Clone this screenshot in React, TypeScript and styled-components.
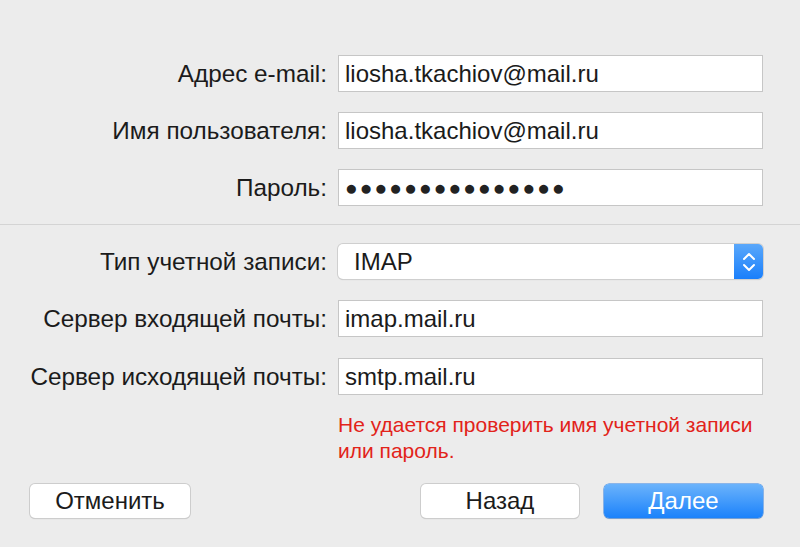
import React from "react";
import styled, { createGlobalStyle } from "styled-components";

const GlobalStyle = createGlobalStyle`
  html, body {
    margin: 0;
    padding: 0;
    background: #ececec;
  }
  body {
    font-family: "Liberation Sans", Arial, sans-serif;
    color: #1d1d1d;
  }
`;

const Window = styled.div`
  width: 800px;
  height: 547px;
  box-sizing: border-box;
  padding-top: 55px;
  background: #ececec;
  overflow: hidden;
`;

const Section = styled.div<{ $gap: number }>`
  display: grid;
  grid-template-columns: 1fr 425px;
  column-gap: 11px;
  row-gap: ${(p) => p.$gap}px;
  padding-right: 37px;
  align-items: center;
`;

const Label = styled.label`
  text-align: right;
  font-size: 24.3px;
  white-space: nowrap;
  color: #1b1b1b;
`;

const Field = styled.div`
  height: 37px;
  box-sizing: border-box;
  border: 1px solid #c6c6c6;
  background: #fff;
  display: flex;
  align-items: center;
  padding-left: 6px;
  font-size: 24px;
  color: #1b1b1b;
  white-space: nowrap;
`;

const Dots = styled.span`
  font-size: 21px;
  letter-spacing: 2.1px;
  color: #222;
`;

const Separator = styled.div`
  height: 1px;
  background: #d4d4d4;
  margin: 18px 0 19px;
`;

const Select = styled.div`
  height: 35px;
  box-sizing: border-box;
  display: flex;
  border-radius: 5px;
  background: #fff;
  box-shadow: 0 0 0 1px #cfcfcf, 0 1px 1px rgba(0, 0, 0, 0.18);
  overflow: hidden;
`;

const SelectValue = styled.div`
  flex: 1;
  display: flex;
  align-items: center;
  padding-left: 16px;
  font-size: 24px;
  color: #1b1b1b;
`;

const SelectArrows = styled.div`
  width: 29px;
  background: linear-gradient(#5aa8fb, #1a7ffb);
  display: flex;
  align-items: center;
  justify-content: center;
`;

const ErrorText = styled.div`
  grid-column: 2;
  color: #e2231a;
  font-size: 21px;
  line-height: 26px;
  margin-top: -4px;
  white-space: nowrap;
`;

const Footer = styled.div`
  display: flex;
  align-items: center;
  padding: 0 37px 0 30px;
  margin-top: 20px;
`;

const Spacer = styled.div`
  flex: 1;
`;

const Button = styled.button<{ $primary?: boolean; $width: number }>`
  width: ${(p) => p.$width}px;
  height: 34px;
  border: none;
  border-radius: 5px;
  font-family: "Liberation Sans", Arial, sans-serif;
  font-size: 24px;
  padding: 0;
  color: ${(p) => (p.$primary ? "#fff" : "#1b1b1b")};
  background: ${(p) =>
    p.$primary ? "linear-gradient(#6bb3fb, #1b82fb)" : "#fff"};
  box-shadow: ${(p) =>
    p.$primary
      ? "0 0 0 0.5px #2a7fe6, 0 1px 1px rgba(0,0,0,0.2)"
      : "0 0 0 1px #cdcdcd, 0 1px 1px rgba(0,0,0,0.2)"};
  & + & {
    margin-left: 25px;
  }
`;

const Chevrons = () => (
  <svg width="14" height="24" viewBox="0 0 14 24">
    <path
      d="M2 9 L7 4 L12 9"
      fill="none"
      stroke="#fff"
      strokeWidth="2"
      strokeLinecap="round"
      strokeLinejoin="round"
    />
    <path
      d="M2 15 L7 20 L12 15"
      fill="none"
      stroke="#fff"
      strokeWidth="2"
      strokeLinecap="round"
      strokeLinejoin="round"
    />
  </svg>
);

export default function App() {
  return (
    <>
      <GlobalStyle />
      <Window>
        <Section $gap={20}>
          <Label>Адрес e-mail:</Label>
          <Field>liosha.tkachiov@mail.ru</Field>
          <Label>Имя пользователя:</Label>
          <Field>liosha.tkachiov@mail.ru</Field>
          <Label>Пароль:</Label>
          <Field>
            <Dots>{"●".repeat(15)}</Dots>
          </Field>
        </Section>
        <Separator />
        <Section $gap={21}>
          <Label>Тип учетной записи:</Label>
          <Select>
            <SelectValue>IMAP</SelectValue>
            <SelectArrows>
              <Chevrons />
            </SelectArrows>
          </Select>
          <Label>Сервер входящей почты:</Label>
          <Field>imap.mail.ru</Field>
          <Label>Сервер исходящей почты:</Label>
          <Field>smtp.mail.ru</Field>
          <ErrorText>
            Не удается проверить имя учетной записи
            <br />
            или пароль.
          </ErrorText>
        </Section>
        <Footer>
          <Button $width={160}>Отменить</Button>
          <Spacer />
          <Button $width={158}>Назад</Button>
          <Button $width={159} $primary>
            Далее
          </Button>
        </Footer>
      </Window>
    </>
  );
}
